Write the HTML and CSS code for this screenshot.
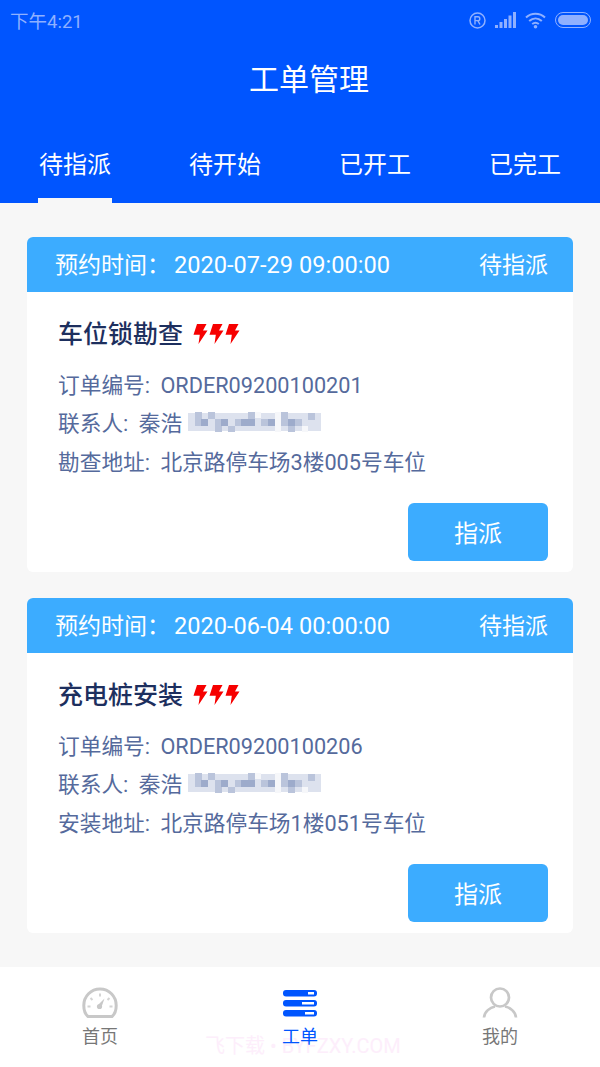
FILE: index.html
```html
<!DOCTYPE html>
<html lang="zh-CN">

<head>
    <meta charset="UTF-8">
    <meta name="viewport" content="width=device-width, initial-scale=1.0">
    <title>工单管理</title>
    <link rel="stylesheet" href="styles.css">
</head>

<body>
    <svg class="defs" width="0" height="0">
        <symbol id="bolt" viewBox="0 0 15 20">
            <path d="M4 0H13.500L10 6.500H14.500L5.500 20L6.800 10.800H0.500Z" fill="#f60000" />
        </symbol>
        <symbol id="mosaic" viewBox="0 0 133 20">
            <rect x="0" y="1" width="133" height="18" fill="#dde2ee" />
            <g fill="#bac4db">
                <rect x="7" y="0" width="7" height="14" />
                <rect x="20" y="0" width="7" height="7" />
                <rect x="27" y="7" width="7" height="13" />
                <rect x="47" y="7" width="7" height="7" />
                <rect x="60" y="0" width="7" height="7" />
                <rect x="73" y="7" width="7" height="7" />
                <rect x="93" y="0" width="7" height="14" />
                <rect x="107" y="7" width="7" height="7" />
                <rect x="120" y="1" width="7" height="7" />
                <rect x="40" y="14" width="7" height="6" />
                <rect x="100" y="14" width="7" height="6" />
            </g>
            <g fill="#9dabcb">
                <rect x="13" y="7" width="7" height="7" />
                <rect x="33" y="7" width="7" height="7" />
                <rect x="53" y="7" width="14" height="7" />
                <rect x="80" y="7" width="7" height="7" />
                <rect x="100" y="7" width="7" height="7" />
            </g>
            <g fill="#f6f7fa">
                <rect x="67" y="0" width="6" height="6" />
                <rect x="87" y="0" width="6" height="20" />
                <rect x="114" y="14" width="6" height="6" />
            </g>
        </symbol>
    </svg>

    <div class="page">
        <header class="top">
            <div class="status">
                <span class="clock">下午4:21</span>
                <div class="status-icons">
                    <svg width="17" height="17" viewBox="0 0 17 17">
                        <circle cx="8.500" cy="8.500" r="7.500" fill="none" stroke="#8fb0ff" stroke-width="1.500" />
                        <path d="M6 12.500V4.800H9C11.400 4.800 11.400 8.600 9 8.600H6M8.800 8.600L11 12.500" fill="none" stroke="#8fb0ff" stroke-width="1.400" />
                    </svg>
                    <svg class="signal" width="21" height="16" viewBox="0 0 21 16">
                        <path d="M0 13h3v3H0zM4.500 10h3v6h-3zM9 7h3v9H9zM13.500 3.500h3V16h-3zM18 0h3v16h-3z" fill="#8fb0ff" />
                    </svg>
                    <svg class="wifi" width="22" height="17" viewBox="0 0 22 17">
                        <path d="M1 5.500C6.500 0.500 14.500 0.500 20 5.500M4.200 9C8 5.500 13 5.500 16.800 9M7.200 12C9.500 10.200 11.500 10.200 13.800 12" fill="none" stroke="#8fb0ff" stroke-width="2" />
                        <circle cx="10.500" cy="14.800" r="1.800" fill="#8fb0ff" />
                    </svg>
                    <div class="battery"><div class="battery-fill"></div></div>
                </div>
            </div>
            <h1 class="title">工单管理</h1>
            <nav class="tabs">
                <div class="tab tab-on">待指派</div>
                <div class="tab">待开始</div>
                <div class="tab">已开工</div>
                <div class="tab">已完工</div>
            </nav>
        </header>

        <main class="list">
            <section class="card">
                <div class="card-head">
                    <span>预约时间：<span class="when">2020-07-29 09:00:00</span></span>
                    <span>待指派</span>
                </div>
                <div class="card-body">
                    <div class="card-title">
                        <h2>车位锁勘查</h2>
                        <div class="bolts">
                            <svg width="15" height="20"><use href="#bolt" /></svg>
                            <svg width="15" height="20"><use href="#bolt" /></svg>
                            <svg width="15" height="20"><use href="#bolt" /></svg>
                        </div>
                    </div>
                    <p class="row">订单编号: ORDER09200100201</p>
                    <p class="row">联系人: 秦浩<svg class="phone" width="133" height="20"><use href="#mosaic" /></svg></p>
                    <p class="row">勘查地址: 北京路停车场3楼005号车位</p>
                    <div class="actions"><button class="btn">指派</button></div>
                </div>
            </section>

            <section class="card">
                <div class="card-head">
                    <span>预约时间：<span class="when">2020-06-04 00:00:00</span></span>
                    <span>待指派</span>
                </div>
                <div class="card-body">
                    <div class="card-title">
                        <h2>充电桩安装</h2>
                        <div class="bolts">
                            <svg width="15" height="20"><use href="#bolt" /></svg>
                            <svg width="15" height="20"><use href="#bolt" /></svg>
                            <svg width="15" height="20"><use href="#bolt" /></svg>
                        </div>
                    </div>
                    <p class="row">订单编号: ORDER09200100206</p>
                    <p class="row">联系人: 秦浩<svg class="phone" width="133" height="20"><use href="#mosaic" /></svg></p>
                    <p class="row">安装地址: 北京路停车场1楼051号车位</p>
                    <div class="actions"><button class="btn">指派</button></div>
                </div>
            </section>
        </main>

        <footer class="bottom">
            <div class="watermark">飞下载 • BYFZXY.COM</div>
            <div class="nav-item">
                <svg width="36" height="32" viewBox="0 0 36 32">
                    <path d="M6 29.500C3 27 1.800 22.500 1.800 18.500C1.800 9 9 2 18 2C27 2 34.200 9 34.200 18.500C34.200 22.500 33 27 30 29.500Z" fill="none" stroke="#c8c8c8" stroke-width="3" />
                    <path d="M18 6.500V9.500M8.500 11L10.500 13M27.500 11L25.500 13M5.500 19.500H8.500M27.500 19.500H30.500" stroke="#d4d4d4" stroke-width="2" />
                    <path d="M16.500 17.500L22.500 11.500L19.500 20Z" fill="#c8c8c8" />
                    <circle cx="17.500" cy="19.500" r="2.600" fill="#c8c8c8" />
                </svg>
                <span>首页</span>
            </div>
            <div class="nav-item nav-on">
                <svg width="36" height="32" viewBox="0 0 36 32">
                    <rect x="1" y="3" width="34" height="6.500" rx="3" fill="#0055ff" />
                    <rect x="1" y="13" width="34" height="6.500" rx="3" fill="#0055ff" />
                    <rect x="1" y="23" width="34" height="6.500" rx="3" fill="#0055ff" />
                    <rect x="26" y="5" width="6" height="2.500" fill="#fff" />
                    <rect x="20" y="15" width="12" height="2.500" fill="#fff" />
                    <rect x="23" y="25" width="9" height="2.500" fill="#fff" />
                </svg>
                <span>工单</span>
            </div>
            <div class="nav-item">
                <svg width="36" height="32" viewBox="0 0 36 32">
                    <circle cx="18" cy="10.500" r="9" fill="none" stroke="#c8c8c8" stroke-width="2.700" />
                    <path d="M2 30.500C2.500 24.500 8 20.500 13 19.500M34 30.500C33.500 24.500 28 20.500 23 19.500" fill="none" stroke="#c8c8c8" stroke-width="2.700" />
                </svg>
                <span>我的</span>
            </div>
        </footer>
    </div>
</body>

</html>
```

FILE: styles.css
```css
* {
    box-sizing: border-box;
}

body {
    margin: 0;
    font-family: Roboto, "Noto Sans CJK SC", sans-serif;
}

.defs {
    position: absolute;
}

.page {
    display: flex;
    flex-direction: column;
    width: 600px;
    height: 1067px;
    overflow: hidden;
    background-color: #f7f7f7;
}

.top {
    height: 203px;
    background-color: #0055ff;
    color: #fff;
}

.status {
    display: flex;
    justify-content: space-between;
    align-items: center;
    height: 40px;
    padding: 0 9px 0 10px;
    color: #8fb0ff;
}

.clock {
    font-size: 18.500px;
}

.status-icons {
    display: flex;
    align-items: center;
}

.signal {
    margin-left: 9px;
}

.wifi {
    margin-left: 9px;
}

.battery {
    width: 36px;
    height: 16px;
    margin-left: 8px;
    padding: 2px;
    border: 1.500px solid #8fb0ff;
    border-radius: 8px;
}

.battery-fill {
    height: 100%;
    background-color: #8fb0ff;
    border-radius: 5px;
}

.title {
    height: 78px;
    margin: 0;
    padding-left: 18px;
    font-size: 30px;
    font-weight: 400;
    line-height: 80px;
    text-align: center;
}

.tabs {
    display: flex;
    height: 85px;
}

.tab {
    flex: 1;
    display: flex;
    justify-content: center;
    padding-top: 31px;
    font-size: 24px;
    line-height: 32px;
}

.tab-on {
    position: relative;
}

.tab-on::after {
    content: "";
    position: absolute;
    left: 38px;
    bottom: 0;
    width: 74px;
    height: 5px;
    background-color: #f7f7f7;
}

.list {
    flex: 1;
    display: flex;
    flex-direction: column;
    gap: 26px;
    padding: 34px 27px 0;
}

.card {
    height: 335px;
    background-color: #fff;
    border-radius: 6px;
    overflow: hidden;
}

.card-head {
    display: flex;
    justify-content: space-between;
    align-items: center;
    height: 55px;
    padding: 0 25px 4px 28px;
    background-color: #3cacff;
    color: #fff;
    font-size: 23px;
}

.when {
    margin-left: 4px;
    font-size: 23.600px;
}

.card-body {
    padding: 23px 25px 0 31px;
}

.card-title {
    display: flex;
    align-items: center;
    height: 34px;
    margin-bottom: 15px;
}

.card-title h2 {
    margin: 0;
    color: #1d2f5e;
    font-size: 25px;
    font-weight: 500;
}

.bolts {
    display: flex;
    gap: 1px;
    margin: 3px 0 0 10px;
}

.row {
    display: flex;
    align-items: center;
    height: 38.500px;
    margin: 0;
    color: #556a9c;
    font-size: 21.700px;
    word-spacing: 5px;
    white-space: pre;
}

.phone {
    margin-left: 6px;
}

.actions {
    display: flex;
    justify-content: flex-end;
    margin-top: 23.500px;
}

.btn {
    width: 140px;
    height: 58px;
    padding: 0 0 2px;
    border: 0;
    border-radius: 6px;
    background-color: #3cacff;
    color: #fff;
    font-family: inherit;
    font-size: 24px;
}

.bottom {
    position: relative;
    display: flex;
    height: 100px;
    background-color: #fff;
}

.nav-item {
    position: relative;
    flex: 1;
    display: flex;
    flex-direction: column;
    align-items: center;
    padding-top: 20px;
    color: #777;
    font-size: 18px;
    line-height: 26px;
}

.nav-item svg {
    margin-bottom: 5px;
}

.nav-on {
    color: #0055ff;
}

/* sits under the nav labels */
.watermark {
    position: absolute;
    left: 205px;
    top: 66px;
    color: #fdeefb;
    font-size: 20px;
    line-height: 26px;
    white-space: nowrap;
}
```
